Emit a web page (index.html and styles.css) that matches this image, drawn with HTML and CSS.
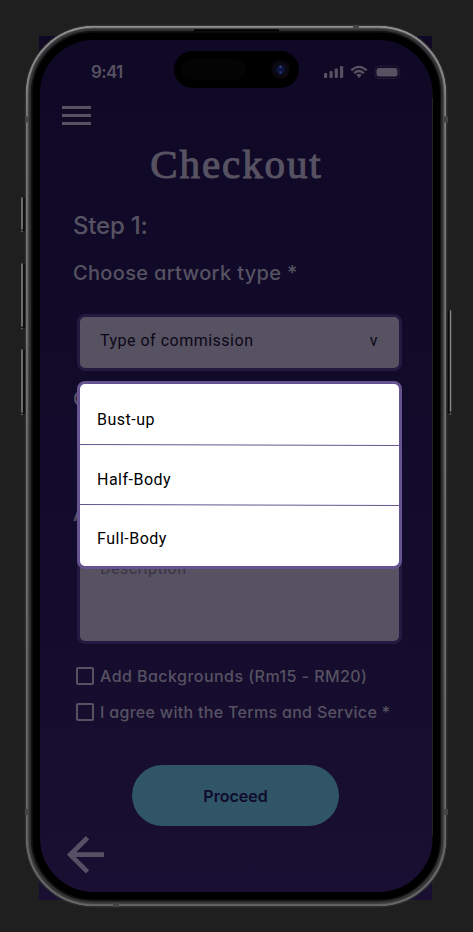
FILE: index.html
```html
<!DOCTYPE html>
<html lang="en">
<head>
<meta charset="utf-8">
<meta name="viewport" content="width=device-width, initial-scale=1">
<title>Checkout</title>
<link rel="stylesheet" href="styles.css">
</head>
<body>
<main class="screen">
  <header class="status">
    <span class="time">9:41</span>
    <div class="island"><i class="sensor"></i><i class="camera"></i></div>
    <svg class="signals" width="80" height="16" viewBox="0 0 80 16">
      <g fill="#575262">
        <rect x="1" y="9" width="3.2" height="5" rx="1"/><rect x="6.5" y="7" width="3.2" height="7" rx="1"/><rect x="11.7" y="4.5" width="3.2" height="9.5" rx="1"/><rect x="17" y="2" width="3.2" height="12" rx="1"/>
        <path d="M33.2 10.8 36 14 38.8 10.8Q36 8.800 33.200 10.800Z"/>
        <rect x="53.500" y="4" width="21" height="8.600" rx="2.400"/>
      </g>
      <g fill="none" stroke="#575262" stroke-width="2.300">
        <path d="M28.300 6.300Q36 -.6 43.700 6.300"/><path d="M31.100 9.200Q36 4.900 40.900 9.200"/>
      </g>
      <rect x="51.800" y="2.100" width="24.600" height="12.400" rx="4" fill="none" stroke="#241e35"/>
      <path d="M77.700 6.300q1.600 2 0 4z" fill="#292339"/>
    </svg>
  </header>
  <button class="menu" aria-label="Menu"><i></i><i></i><i></i></button>
  <h1>Checkout</h1>
  <section class="form">
    <h2>Step 1:</h2>
    <h3>Choose artwork type *</h3>
    <div class="picker">
      <div class="field select"><span>Type of commission</span><span class="chev">v</span></div>
      <div class="dropdown">
        <div class="option">Bust-up</div>
        <div class="option">Half-Body</div>
        <div class="option">Full-Body</div>
        <svg class="rules" width="319" height="182" viewBox="0 0 319 182" stroke="#65548f"><path d="M0 60.500 319 61.500M0 120.500 319 121.500"/></svg>
      </div>
    </div>
    <h3 class="under first">C</h3>
    <h3 class="under second">A</h3>
    <div class="field area">Description</div>
    <label class="check"><i></i><span class="bg-label">Add Backgrounds (Rm15 - RM20)</span></label>
    <label class="check"><i></i><span class="terms-label">I agree with the Terms and Service *</span></label>
  </section>
  <button class="proceed">Proceed</button>
  <svg class="back" width="38" height="38" viewBox="0 0 38 38" fill="none" stroke="#575065" stroke-width="4.700"><path d="M20.500 1.800 3.200 18.700 20.500 35.800M4 18.700H37"/></svg>
</main>
<svg class="frame" width="473" height="932" viewBox="0 0 473 932" fill="none">
  <defs>
    <linearGradient id="metal" x1="0" y1="0" x2="0" y2="1"><stop offset="0" stop-color="#8f8e8d"/><stop offset=".12" stop-color="#777675"/><stop offset="1" stop-color="#646464"/></linearGradient>
  </defs>
  <rect x="36" y="36" width="400.500" height="860" rx="58" stroke="#000" stroke-width="8"/>
  <rect x="31.500" y="31.500" width="409.500" height="869" rx="62" stroke="#121212" stroke-width="2"/>
  <rect x="29.500" y="29.500" width="413" height="873" rx="64" stroke="#323333" stroke-width="2.500"/>
  <rect x="27" y="27" width="418" height="878" rx="66" stroke="url(#metal)" stroke-width="2.600"/>
  <rect x="25.200" y="25.200" width="421.800" height="881.800" rx="68" stroke="#2d2f2e"/>
  <rect x="28" y="28" width="416" height="876" rx="65" stroke="#505050" stroke-width=".6"/>
  <path d="M194 30.300H279" stroke="#020202" stroke-width="2"/>
  <path d="M432.500 98V835" stroke="#242329"/>
  <g stroke="#444" stroke-width="4">
    <path d="M25 119.500H29M444 119.500H448M25 812H29M444 812H448" stroke-width="6"/>
    <path d="M356 25V28.500M116 903V907" stroke-width="6"/>
  </g>
  <g stroke="#878583" stroke-width="1.500" stroke-linecap="round">
    <path d="M22 198V229M22 264V326M22 350V412M450.500 311V411"/>
    <path d="M22 231.500V231.600M22 328.700V328.800M22 414.500V414.600M450.500 414V414.100"/>
  </g>
  <path d="M24 198V231M24 264V328M24 350V414M448.500 311V413" stroke="#080808" stroke-width="1.500"/>
</svg>
</body>
</html>
```
FILE: styles.css
```css
* { box-sizing: border-box; }
body {
  margin: 0;
  min-height: 932px;
  padding: 36px 41px 32px 39px;
  background: #1f1f1f;
  position: relative;
  overflow: hidden;
  color: #575262;
}
h1, h2, h3 { margin: 0; font-weight: 500; }
button { border: 0; padding: 0; background: none; }

.screen {
  width: 393px;
  height: 864px;
  display: flex;
  flex-direction: column;
  background: linear-gradient(#0f0926, #110a29 40%, #190f32);
  font-family: Inter, sans-serif;
  font-feature-settings: "cv11";
}
.frame { position: absolute; left: 0; top: 0; pointer-events: none; }

.status {
  height: 52px;
  padding: 15px 28px 0 52px;
  display: flex;
  align-items: flex-start;
}
.time { width: 83px; font-size: 17px; line-height: 42px; font-weight: 600; letter-spacing: -0.7px; }
.island {
  width: 125px;
  height: 37px;
  padding: 8px 9px 8px 7px;
  border-radius: 19px;
  background: #000;
  display: flex;
  justify-content: space-between;
}
.sensor { width: 65px; height: 21px; border-radius: 11px; background: #040404; }
.camera {
  width: 19px;
  height: 19px;
  margin-top: 1px;
  border-radius: 50%;
  background: radial-gradient(circle at 50% 36%, #2c4486 0 .6px, transparent 1.8px), radial-gradient(circle at 50% 66%, #22347c 0 .6px, transparent 1.8px), radial-gradient(circle, #0e1640 0 3px, #0b0a16 5px, #09060b 9px);
}
.signals { margin: 13px 0 0 24px; flex: none; }

.menu { width: 29px; margin: 18px 0 0 23px; display: grid; gap: 5px; }
.menu i { height: 3px; background: #575262; }

h1 {
  margin-top: 12px;
  height: 54px;
  line-height: 54px;
  padding-left: 2px;
  text-align: center;
  font-family: "Liberation Serif", serif;
  font-size: 41px;
  font-weight: 400;
  letter-spacing: 1.9px;
  -webkit-text-stroke: 1.1px #575262;
}

.form { padding: 0 30px 0 34px; margin-top: 18px; }
h2 { height: 34px; line-height: 34px; font-size: 24px; letter-spacing: -0.2px; }
h3 { height: 28px; line-height: 28px; margin-top: 16px; font-size: 20px; letter-spacing: 0.33px; }
.picker { position: relative; margin: 27px 0 0 4px; }
.field {
  border: 3px solid #231a41;
  border-radius: 8px;
  background: #575262;
  font: 16px/20px Roboto, sans-serif;
  letter-spacing: 0.5px;
  padding: 14px 21px 14px 20px;
}
.select { height: 57px; display: flex; justify-content: space-between; color: #0c0717; }
.dropdown {
  position: absolute;
  z-index: 2;
  top: 67px;
  left: 0;
  width: 325px;
  height: 188px;
  padding-top: 6px;
  border: 3px solid #65548f;
  border-radius: 8px;
  background: #fff;
  color: #000;
}
.option { height: 59.5px; padding-left: 17px; font: 16px/60px Roboto, sans-serif; letter-spacing: 0.5px; }
.rules { position: absolute; left: 0; top: 0; }
.under.first { margin-top: 14px; }
.under.second { margin-top: 87px; }
.area { height: 102px; margin: 14px 0 0 4px; color: #393445; }
.check { display: flex; align-items: center; height: 18px; margin: 23px 0 0 3px; font-size: 16px; line-height: 18px; font-weight: 500; white-space: nowrap; }
.check + .check { margin-top: 18px; }
.check i { flex: none; width: 18px; height: 18px; margin-right: 6px; border: 2px solid #575262; border-radius: 2px; }
.bg-label { letter-spacing: 0.45px; }
.terms-label { letter-spacing: 0.31px; }
.proceed {
  width: 207px;
  height: 61px;
  margin: 44px 0 0 93px;
  border-radius: 31px;
  background: #2f5566;
  color: #100a2c;
  font: 600 16px Inter, sans-serif;
}
.back { margin: 10px 0 0 28px; }
```
